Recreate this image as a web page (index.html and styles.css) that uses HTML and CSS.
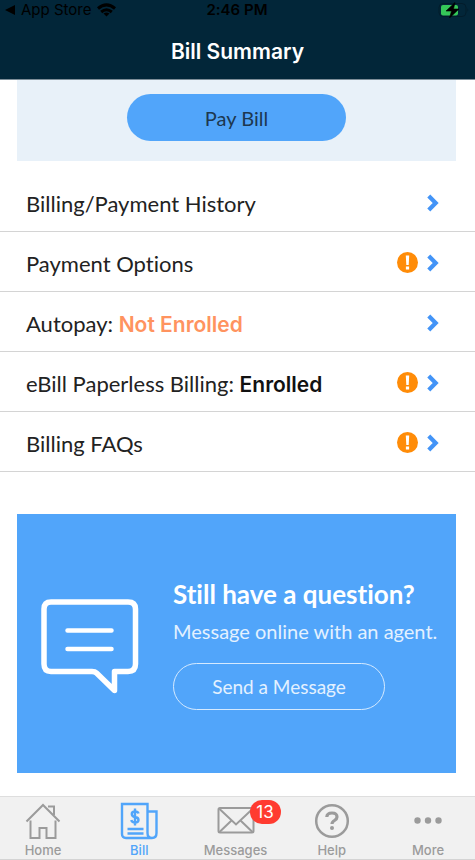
FILE: index.html
```html
<!DOCTYPE html>
<html lang="en">
<head>
<meta charset="utf-8">
<meta name="viewport" content="width=device-width, initial-scale=1">
<title>Bill Summary</title>
<link rel="stylesheet" href="styles.css">
</head>
<body>
<div class="app">
  <header class="header">
    <div class="status">
      <div class="status-left">
        <svg class="back" width="10" height="10" viewBox="0 0 10 10"><path d="M0 5 10 0v10z"/></svg>
        <span>App Store</span>
        <svg width="19" height="14" viewBox="0 0 19 14" fill="none" stroke="currentColor" stroke-width="3"><path d="M1 5.500Q9.500-1.800 18 5.500"/><path d="M4.200 9Q9.500 4.500 14.800 9"/><path d="M6.500 10.500Q9.500 8.300 12.500 10.500L9.500 13.600z" fill="currentColor" stroke="none"/></svg>
      </div>
      <span class="time">2:46 PM</span>
      <svg class="battery" width="31" height="16" viewBox="0 0 31 16"><rect x="1" y="1.500" width="27" height="13" rx="4" fill="none" stroke="#021c2b"/><path d="M29.500 6q1.500 2 0 4z" fill="#021c2b"/><rect x="3" y="3" width="17" height="10.500" rx="2" fill="#35c759"/><path d="M17 .5 8 9h5.500l-2 7L21 7h-5.500z" fill="#000" stroke="#000" stroke-width=".6"/></svg>
    </div>
    <h1 class="title">Bill Summary</h1>
  </header>

  <main class="content">
    <section class="pay-panel"><button class="pay-button" type="button">Pay Bill</button></section>

    <nav class="rows" aria-label="Billing">
      <a class="row" href="#history"><span class="row-label">Billing/Payment History</span><svg class="chevron" viewBox="0 0 12 17"><path d="M2 2 8.500 8.500 2 15"/></svg></a>
      <a class="row" href="#options"><span class="row-label">Payment Options</span><svg class="alert" viewBox="0 0 21 21"><circle cx="10.500" cy="10.500" r="10.500"/><path d="M8.800 3.500h3.400l-.5 9.500H9.300zM8.900 14.500h3.200v3H8.900z"/></svg><svg class="chevron" viewBox="0 0 12 17"><path d="M2 2 8.500 8.500 2 15"/></svg></a>
      <a class="row" href="#autopay"><span class="row-label">Autopay: <strong class="off">Not Enrolled</strong></span><svg class="chevron" viewBox="0 0 12 17"><path d="M2 2 8.500 8.500 2 15"/></svg></a>
      <a class="row" href="#ebill"><span class="row-label">eBill Paperless Billing: <strong>Enrolled</strong></span><svg class="alert" viewBox="0 0 21 21"><circle cx="10.500" cy="10.500" r="10.500"/><path d="M8.800 3.500h3.400l-.5 9.500H9.300zM8.900 14.500h3.200v3H8.900z"/></svg><svg class="chevron" viewBox="0 0 12 17"><path d="M2 2 8.500 8.500 2 15"/></svg></a>
      <a class="row" href="#faqs"><span class="row-label">Billing FAQs</span><svg class="alert" viewBox="0 0 21 21"><circle cx="10.500" cy="10.500" r="10.500"/><path d="M8.800 3.500h3.400l-.5 9.500H9.300zM8.900 14.500h3.200v3H8.900z"/></svg><svg class="chevron" viewBox="0 0 12 17"><path d="M2 2 8.500 8.500 2 15"/></svg></a>
    </nav>

    <section class="card">
      <svg class="bubble" width="98" height="96" viewBox="0 0 98 96" fill="none" stroke="#fff" stroke-width="5.500" stroke-linecap="round" stroke-linejoin="round"><path d="M10 4H87Q94.500 4 94.500 11V66Q94.500 73.500 87 73.500H73.500V92.500L55.500 75Q54 73.500 51 73.500H10Q3 73.500 3 66V11Q3 4 10 4Z"/><path stroke-width="4.500" d="M26.500 32.500H70.500M26.500 51H70.500"/></svg>
      <div class="card-text">
        <h2 class="card-title">Still have a question?</h2>
        <p class="card-copy">Message online with an agent.</p>
        <button class="send-button" type="button">Send a Message</button>
      </div>
    </section>
  </main>

  <nav class="tabs" aria-label="Main">
    <a class="tab" href="#home"><svg width="36" height="38" viewBox="0 0 36 38" fill="none" stroke="currentColor" stroke-width="2"><path d="M1.500 19.500 18 3l16.500 16.500M5.500 18.500V36h9V26h7v10h9V18.500M23 4.500h6V13"/></svg><span>Home</span></a>
    <a class="tab active" href="#bill" aria-current="page"><svg width="38" height="38" viewBox="0 0 38 38" fill="none" stroke="currentColor" stroke-width="2.400"><path d="M32 36H6Q2 36 2 32V2H27.500V31Q27.500 36 32 36T36.500 31V9.500H27.500"/><path d="M7.500 27H23.500M7.500 31.500H23.500"/><path d="M18.500 11.500Q18 9.500 15 9.500 11.800 9.500 11.800 12T15 15Q18.500 15.500 18.500 18T15 20.500Q11.800 20.500 11.300 18M15 6.500V23.500"/></svg><span>Bill</span></a>
    <a class="tab" href="#messages"><svg width="38" height="38" viewBox="0 0 38 38" fill="none" stroke="currentColor" stroke-width="2"><rect x="1.500" y="6" width="35" height="24.500" rx="1.500"/><path d="M2 6.500 19 22.500 36 6.500M2.500 30 14.500 18.500M35.500 30 23.500 18.500"/></svg><span>Messages</span><b class="badge">13</b></a>
    <a class="tab" href="#help"><svg width="36" height="38" viewBox="0 0 36 38" fill="none" stroke="currentColor" stroke-width="2.500"><circle cx="18" cy="19" r="15.800"/><path stroke-width="3.200" d="M12.800 15Q13 11 18 11T23 15Q23 17 20.500 18.500T18 22"/><circle cx="18" cy="26" r="2" fill="currentColor" stroke="none"/></svg><span>Help</span></a>
    <a class="tab" href="#more"><svg width="36" height="38" viewBox="0 0 36 38" fill="currentColor"><circle cx="7.500" cy="18.500" r="3.200"/><circle cx="18" cy="18.500" r="3.200"/><circle cx="28.500" cy="18.500" r="3.200"/></svg><span>More</span></a>
  </nav>
</div>
</body>
</html>
```

FILE: styles.css
```css
* { box-sizing: border-box; }
body { margin: 0; background: #fff; color: #222; font-family: Lato, "Liberation Sans", sans-serif; font-variant-ligatures: none; }
svg { display: block; flex: none; }
a { color: inherit; text-decoration: none; }
h1, h2, p { margin: 0; }
button { font-family: inherit; font-weight: 400; cursor: pointer; }

.app { display: flex; flex-direction: column; min-height: 100vh; }

.header { background: #022639; border-bottom: 1px solid #7d8d98; font-family: Inter, sans-serif; }
.status { display: grid; grid-template-columns: 1fr auto 1fr; align-items: center; height: 20px; padding: 0 6px 0 5px; color: #000; font-size: 15px; line-height: 20px; }
.status-left { display: flex; align-items: center; gap: 6px; }
.back { fill: #000; }
.time { font-weight: 600; }
.battery { justify-self: end; }
.title { padding: 18px 0 13px; color: #fff; font-size: 21px; font-weight: 600; line-height: 28px; text-align: center; }

.content { flex: 1; }
.pay-panel { margin: 0 19px 11px 17px; padding: 14px 0 20px; background: #e8f1f9; text-align: center; }
.pay-button { display: block; width: 50%; height: 47px; margin: 0 auto; border: 0; border-radius: 24px; background: #51a5fa; color: #1d3850; font-size: 20px; }

.row { display: flex; align-items: center; gap: 8px; height: 60px; padding: 2px 35px 0 26px; border-bottom: 1px solid #d4d4d4; font-size: 22px; line-height: 28px; }
.row-label { flex: 1; padding-top: 2px; white-space: nowrap; }
.row strong { color: #111; font-family: Inter, sans-serif; font-size: 21px; font-weight: 600; line-height: 20px; }
.row .off { color: #ff935f; }
.chevron { width: 14px; height: 18px; fill: none; stroke: #4394f7; stroke-width: 4; }
.alert { width: 21px; height: 21px; fill: #ff8c08; }
.alert path { fill: #fff; }

.card { display: flex; align-items: center; gap: 34px; min-height: 259px; margin: 42px 19px 23px 17px; padding: 4px 0 0 24px; background: #51a5fa; color: #fff; }
.card-text { flex: 1; white-space: nowrap; }
.card-title { font-size: 26px; font-weight: 700; line-height: 26px; }
.card-copy { margin: 10px 0 18px; color: #e3f1ff; font-size: 20px; line-height: 28px; }
.send-button { width: 212px; height: 47px; border: 1px solid #d5eaff; border-radius: 24px; background: transparent; color: #e3f1ff; font-size: 19px; }

.tabs { display: flex; justify-content: space-between; height: 64px; padding: 5px 15px 0 11px; border-top: 1px solid #dedede; border-bottom: 1px solid #d4d4d4; background: #f1f1f1; color: #9b9b9b; font-family: Inter, sans-serif; font-size: 13px; font-weight: 500; line-height: 20px; }
.tab { position: relative; display: flex; flex-direction: column; align-items: center; width: 64px; }
.active { color: #51a5fa; }
.badge { position: absolute; top: -2px; right: -13px; width: 31px; height: 24px; border-radius: 12px; background: #ff3b30; color: #fff; font-size: 17px; font-weight: 400; line-height: 24px; text-align: center; }
```
